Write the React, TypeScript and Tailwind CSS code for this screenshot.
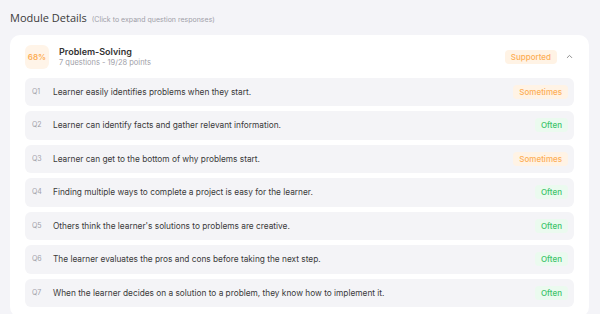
const questions = [
  { q: 'Q1', text: 'Learner easily identifies problems when they start.', answer: 'Sometimes' },
  { q: 'Q2', text: 'Learner can identify facts and gather relevant information.', answer: 'Often' },
  { q: 'Q3', text: 'Learner can get to the bottom of why problems start.', answer: 'Sometimes' },
  { q: 'Q4', text: 'Finding multiple ways to complete a project is easy for the learner.', answer: 'Often' },
  { q: 'Q5', text: "Others think the learner's solutions to problems are creative.", answer: 'Often' },
  { q: 'Q6', text: 'The learner evaluates the pros and cons before taking the next step.', answer: 'Often' },
  { q: 'Q7', text: 'When the learner decides on a solution to a problem, they know how to implement it.', answer: 'Often' },
];

function AnswerBadge({ answer }: { answer: string }) {
  if (answer === 'Often') {
    return (
      <span className="rounded-[4px] bg-[#ebfaef] px-[6px] h-[14px] flex items-center text-[8px] font-medium text-[#3cc46a]">
        {answer}
      </span>
    );
  }
  return (
    <span className="rounded-[4px] bg-[#fff3e5] px-[6px] h-[14px] flex items-center text-[8px] font-medium text-[#fdae55]">
      {answer}
    </span>
  );
}

export default function App() {
  return (
    <div className="w-[600px] h-[314px] overflow-hidden bg-[#f4f4f8] pl-[10px] pr-[11px] pt-[10px] font-['Inter',sans-serif]">
      <div className="flex items-baseline gap-[5px]">
        <h2 className="text-[11px] text-[#3a3a3a] font-['Open_Sans',sans-serif]">Module Details</h2>
        <span className="text-[7px] text-[#a0a0a8]">(Click to expand question responses)</span>
      </div>
      <div className="mt-[8px] bg-white rounded-[10px] pl-[15px] pr-[15px] pt-[10px] pb-[10px]">
        <div className="flex items-center">
          <div className="w-[24px] h-[24px] rounded-[6px] bg-[#fff4e8] flex items-center justify-center text-[8px] font-semibold text-[#fdae55]">
            68%
          </div>
          <div className="ml-[10px] flex flex-col">
            <span className="text-[9px] font-semibold text-[#333] leading-[12px]">Problem-Solving</span>
            <span className="text-[7.5px] text-[#a0a0a8] leading-[10px]">7 questions - 19/28 points</span>
          </div>
          <div className="ml-auto flex items-center gap-[8px]">
            <span className="rounded-[4px] bg-[#fff3e5] h-[14px] px-[6px] flex items-center text-[8px] font-medium text-[#fdae55]">
              Supported
            </span>
            <svg width="9" height="9" viewBox="0 0 24 24" fill="none" stroke="#888" strokeWidth="2.5" strokeLinecap="round" strokeLinejoin="round">
              <path d="M6 15l6-6 6 6" />
            </svg>
          </div>
        </div>
        <div className="mt-[9px] flex flex-col gap-[5px]">
          {questions.map((item) => (
            <div key={item.q} className="h-[28.5px] rounded-[6px] bg-[#f4f4f7] flex items-center pl-[7px] pr-[6px]">
              <span className="w-[21px] text-[7px] text-[#a0a0a8]">{item.q}</span>
              <span className="text-[8.3px] text-[#3a3a3a]">{item.text}</span>
              <div className="ml-auto">
                <AnswerBadge answer={item.answer} />
              </div>
            </div>
          ))}
        </div>
      </div>
    </div>
  );
}
